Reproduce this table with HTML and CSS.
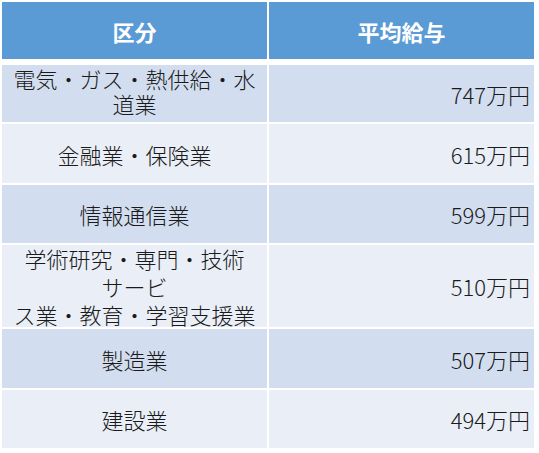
FILE: index.html
```html
<!DOCTYPE html>
<html lang="ja">
<head>
<meta charset="utf-8">
<link rel="stylesheet" href="styles.css">
</head>
<body>
<div class="table">
  <div class="cell head">区分</div>
  <div class="cell head">平均給与</div>

  <div class="cell name odd two">電気・ガス・熱供給・水<br>道業</div>
  <div class="cell num odd">747万円</div>

  <div class="cell name even">金融業・保険業</div>
  <div class="cell num even">615万円</div>

  <div class="cell name odd">情報通信業</div>
  <div class="cell num odd">599万円</div>

  <div class="cell name even three">学術研究・専門・技術<br>サービ<br>ス業・教育・学習支援業</div>
  <div class="cell num even">510万円</div>

  <div class="cell name odd">製造業</div>
  <div class="cell num odd">507万円</div>

  <div class="cell name even">建設業</div>
  <div class="cell num even">494万円</div>
</div>
</body>
</html>
```
FILE: styles.css
```css
html, body {
  margin: 0;
  padding: 0;
  background: #ffffff;
}
body {
  font-family: "Noto Sans CJK JP", "Noto Sans", sans-serif;
  color: #1a1a1a;
}
.table {
  display: grid;
  grid-template-columns: 265px 265px;
  grid-template-rows: 61px 57px 59px 58px 82px 59px 58px;
  column-gap: 2px;
  row-gap: 2px;
  padding: 2px 0 0 2px;
}
.cell {
  display: flex;
  align-items: center;
  font-size: 22px;
  font-weight: 300;
  line-height: 28px;
}
.head {
  background: #5b9bd5;
  color: #ffffff;
  font-weight: 700;
  justify-content: center;
  margin-bottom: 4px;
}
.name {
  justify-content: center;
  text-align: center;
}
.two {
  line-height: 25px;
  padding-bottom: 5px;
}
.three {
  line-height: 28px;
}
.num {
  justify-content: flex-end;
  padding-right: 4px;
}
.odd { background: #d2deef; }
.even { background: #eaeff7; }
```
